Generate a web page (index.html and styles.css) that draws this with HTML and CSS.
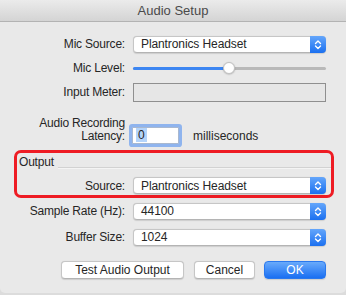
FILE: index.html
```html
<!DOCTYPE html>
<html lang="en">
<head>
    <meta charset="UTF-8" />
    <title>Audio Setup</title>
    <link rel="stylesheet" href="styles.css">
</head>
<body>
    <div class="window">
        <div class="titlebar">Audio Setup</div>

        <div class="row row-mic">
            <label class="lbl">Mic Source:</label>
            <div class="popup">
                <span class="popup-text">Plantronics Headset</span>
                <span class="stepper">
                    <svg width="16" height="17" viewBox="0 0 16 17"><path d="M5.5 7.5 L8 5 L10.5 7.5 M5.5 10 L8 12.5 L10.5 10" fill="none" stroke="#fff" stroke-width="1.4" stroke-linecap="round" stroke-linejoin="round"/></svg>
                </span>
            </div>
        </div>

        <div class="row row-level">
            <label class="lbl">Mic Level:</label>
            <div class="slider">
                <div class="slider-track"></div>
                <div class="slider-fill" style="width: 96px"></div>
                <div class="slider-knob" style="left: 90px"></div>
            </div>
        </div>

        <div class="row row-meter">
            <label class="lbl">Input Meter:</label>
            <div class="meter"></div>
        </div>

        <div class="row row-latency">
            <label class="lbl lbl-two">Audio Recording<br>Latency:</label>
            <div class="latency">
                <div class="textfield"><span class="sel">0</span></div>
                <span class="unit">milliseconds</span>
            </div>
        </div>

        <div class="output-box">
            <div class="group-head">
                <span class="group-title">Output</span>
                <div class="group-line"></div>
            </div>
            <div class="row row-source">
                <label class="lbl lbl-inner">Source:</label>
                <div class="popup">
                    <span class="popup-text">Plantronics Headset</span>
                    <span class="stepper">
                        <svg width="16" height="17" viewBox="0 0 16 17"><path d="M5.5 7.5 L8 5 L10.5 7.5 M5.5 10 L8 12.5 L10.5 10" fill="none" stroke="#fff" stroke-width="1.4" stroke-linecap="round" stroke-linejoin="round"/></svg>
                    </span>
                </div>
            </div>
        </div>

        <div class="row row-rate">
            <label class="lbl">Sample Rate (Hz):</label>
            <div class="popup">
                <span class="popup-text">44100</span>
                <span class="stepper">
                    <svg width="16" height="17" viewBox="0 0 16 17"><path d="M5.5 7.5 L8 5 L10.5 7.5 M5.5 10 L8 12.5 L10.5 10" fill="none" stroke="#fff" stroke-width="1.4" stroke-linecap="round" stroke-linejoin="round"/></svg>
                </span>
            </div>
        </div>

        <div class="row row-buffer">
            <label class="lbl">Buffer Size:</label>
            <div class="popup">
                <span class="popup-text">1024</span>
                <span class="stepper">
                    <svg width="16" height="17" viewBox="0 0 16 17"><path d="M5.5 7.5 L8 5 L10.5 7.5 M5.5 10 L8 12.5 L10.5 10" fill="none" stroke="#fff" stroke-width="1.4" stroke-linecap="round" stroke-linejoin="round"/></svg>
                </span>
            </div>
        </div>

        <div class="buttons">
            <button class="btn btn-test">Test Audio Output</button>
            <button class="btn btn-cancel">Cancel</button>
            <button class="btn btn-ok">OK</button>
        </div>
    </div>
</body>
</html>
```

FILE: styles.css
```css
body {
    margin: 0;
    background-color: #dcdcdc;
    font-family: 'Liberation Sans', Arial, sans-serif;
    font-size: 12px;
    color: #262626;
}

.window {
    width: 346px;
    height: 293px;
    background-color: #e9e9e9;
    border-radius: 0 0 5px 5px;
    overflow: hidden;
}

.titlebar {
    height: 21px;
    line-height: 21px;
    text-align: center;
    font-size: 13px;
    color: #4a4a4a;
    background: linear-gradient(#ebebeb, #d4d4d4);
    border-bottom: 1px solid #b3b3b3;
}

.row {
    display: flex;
    align-items: center;
    height: 20px;
    gap: 8px;
}

.lbl {
    width: 125px;
    flex: none;
    text-align: right;
    letter-spacing: -0.2px;
    white-space: nowrap;
}

.row-mic { margin-top: 12px; }
.row-level { margin-top: 4px; }
.row-meter { margin-top: 4px; }
.row-rate { margin-top: 3px; }
.row-buffer { margin-top: 6px; }

.popup {
    width: 193px;
    height: 17px;
    box-sizing: border-box;
    display: flex;
    align-items: center;
    background-color: #fff;
    border: 1px solid #c6c6c6;
    border-bottom-color: #b4b4b4;
    border-radius: 4px;
    box-shadow: 0 0.5px 1px rgba(0, 0, 0, 0.12);
}

    .popup-text {
        flex: 1;
        padding-left: 7px;
        letter-spacing: -0.1px;
    }

    .stepper {
        width: 16px;
        height: 17px;
        margin: -1px -1px -1px 0;
        border-radius: 0 4px 4px 0;
        background: linear-gradient(#64a6fb, #1b70f0);
        display: flex;
    }

.slider {
    position: relative;
    width: 193px;
    height: 14px;
}

    .slider-track {
        position: absolute;
        left: 0;
        right: 0;
        top: 6px;
        height: 3px;
        border-radius: 2px;
        background-color: #b9b9b9;
    }

    .slider-fill {
        position: absolute;
        left: 0;
        top: 6px;
        height: 3px;
        border-radius: 2px;
        background-color: #3d86f2;
    }

    .slider-knob {
        position: absolute;
        top: 1px;
        width: 12px;
        height: 12px;
        box-sizing: border-box;
        border-radius: 50%;
        background-color: #fff;
        border: 1px solid #c2c2c2;
        box-shadow: 0 0.5px 1.5px rgba(0, 0, 0, 0.25);
    }

.meter {
    width: 193px;
    height: 19px;
    box-sizing: border-box;
    border: 1px solid #8f8f8f;
    background-color: #e6e6e6;
}

.row-latency {
    margin-top: 15px;
    height: 29px;
    align-items: flex-start;
}

.lbl-two {
    line-height: 13px;
}

.latency {
    display: flex;
    align-items: center;
    gap: 14px;
    margin-top: 10px;
    margin-left: -1px;
}

    .textfield {
        width: 47px;
        height: 17px;
        box-sizing: border-box;
        background-color: #fff;
        border: 1px solid #a9b8cf;
        box-shadow: 0 0 0 3px #8fb4ee;
        border-radius: 1px;
        padding-left: 3px;
        line-height: 15px;
    }

        .textfield .sel {
            background-color: #b4d4fb;
            padding: 0 2px;
        }

.output-box {
    margin: 4px 0 0 14px;
    width: 320px;
    height: 48px;
    box-sizing: border-box;
    border: 3px solid #ee1c24;
    border-radius: 7px;
}

.group-head {
    display: flex;
    align-items: flex-start;
    height: 23px;
}

    .group-title {
        padding: 2px 0 0 2px;
        line-height: 14px;
        letter-spacing: -0.2px;
    }

    .group-line {
        flex: 1;
        margin: 14px 0 0 4px;
        border-top: 1px solid #d2d2d2;
        border-bottom: 1px solid #f4f4f4;
    }

.row-source {
    height: 19px;
}

.lbl-inner {
    width: 108px;
}

.buttons {
    display: flex;
    justify-content: flex-end;
    gap: 10px;
    margin-top: 14px;
    padding-right: 20px;
}

.btn {
    height: 18px;
    box-sizing: border-box;
    font-family: 'Liberation Sans', Arial, sans-serif;
    font-size: 12px;
    color: #262626;
    background-color: #fff;
    border: 1px solid #c6c6c6;
    border-bottom-color: #b4b4b4;
    border-radius: 4px;
    box-shadow: 0 0.5px 1px rgba(0, 0, 0, 0.12);
    padding: 0;
    line-height: 16px;
}

.btn-test { width: 123px; }
.btn-cancel { width: 61px; margin-right: -1px; }

.btn-ok {
    width: 62px;
    color: #fff;
    border-color: #2a78ee;
    background: linear-gradient(#69aafb, #1a6ff2);
}
```
